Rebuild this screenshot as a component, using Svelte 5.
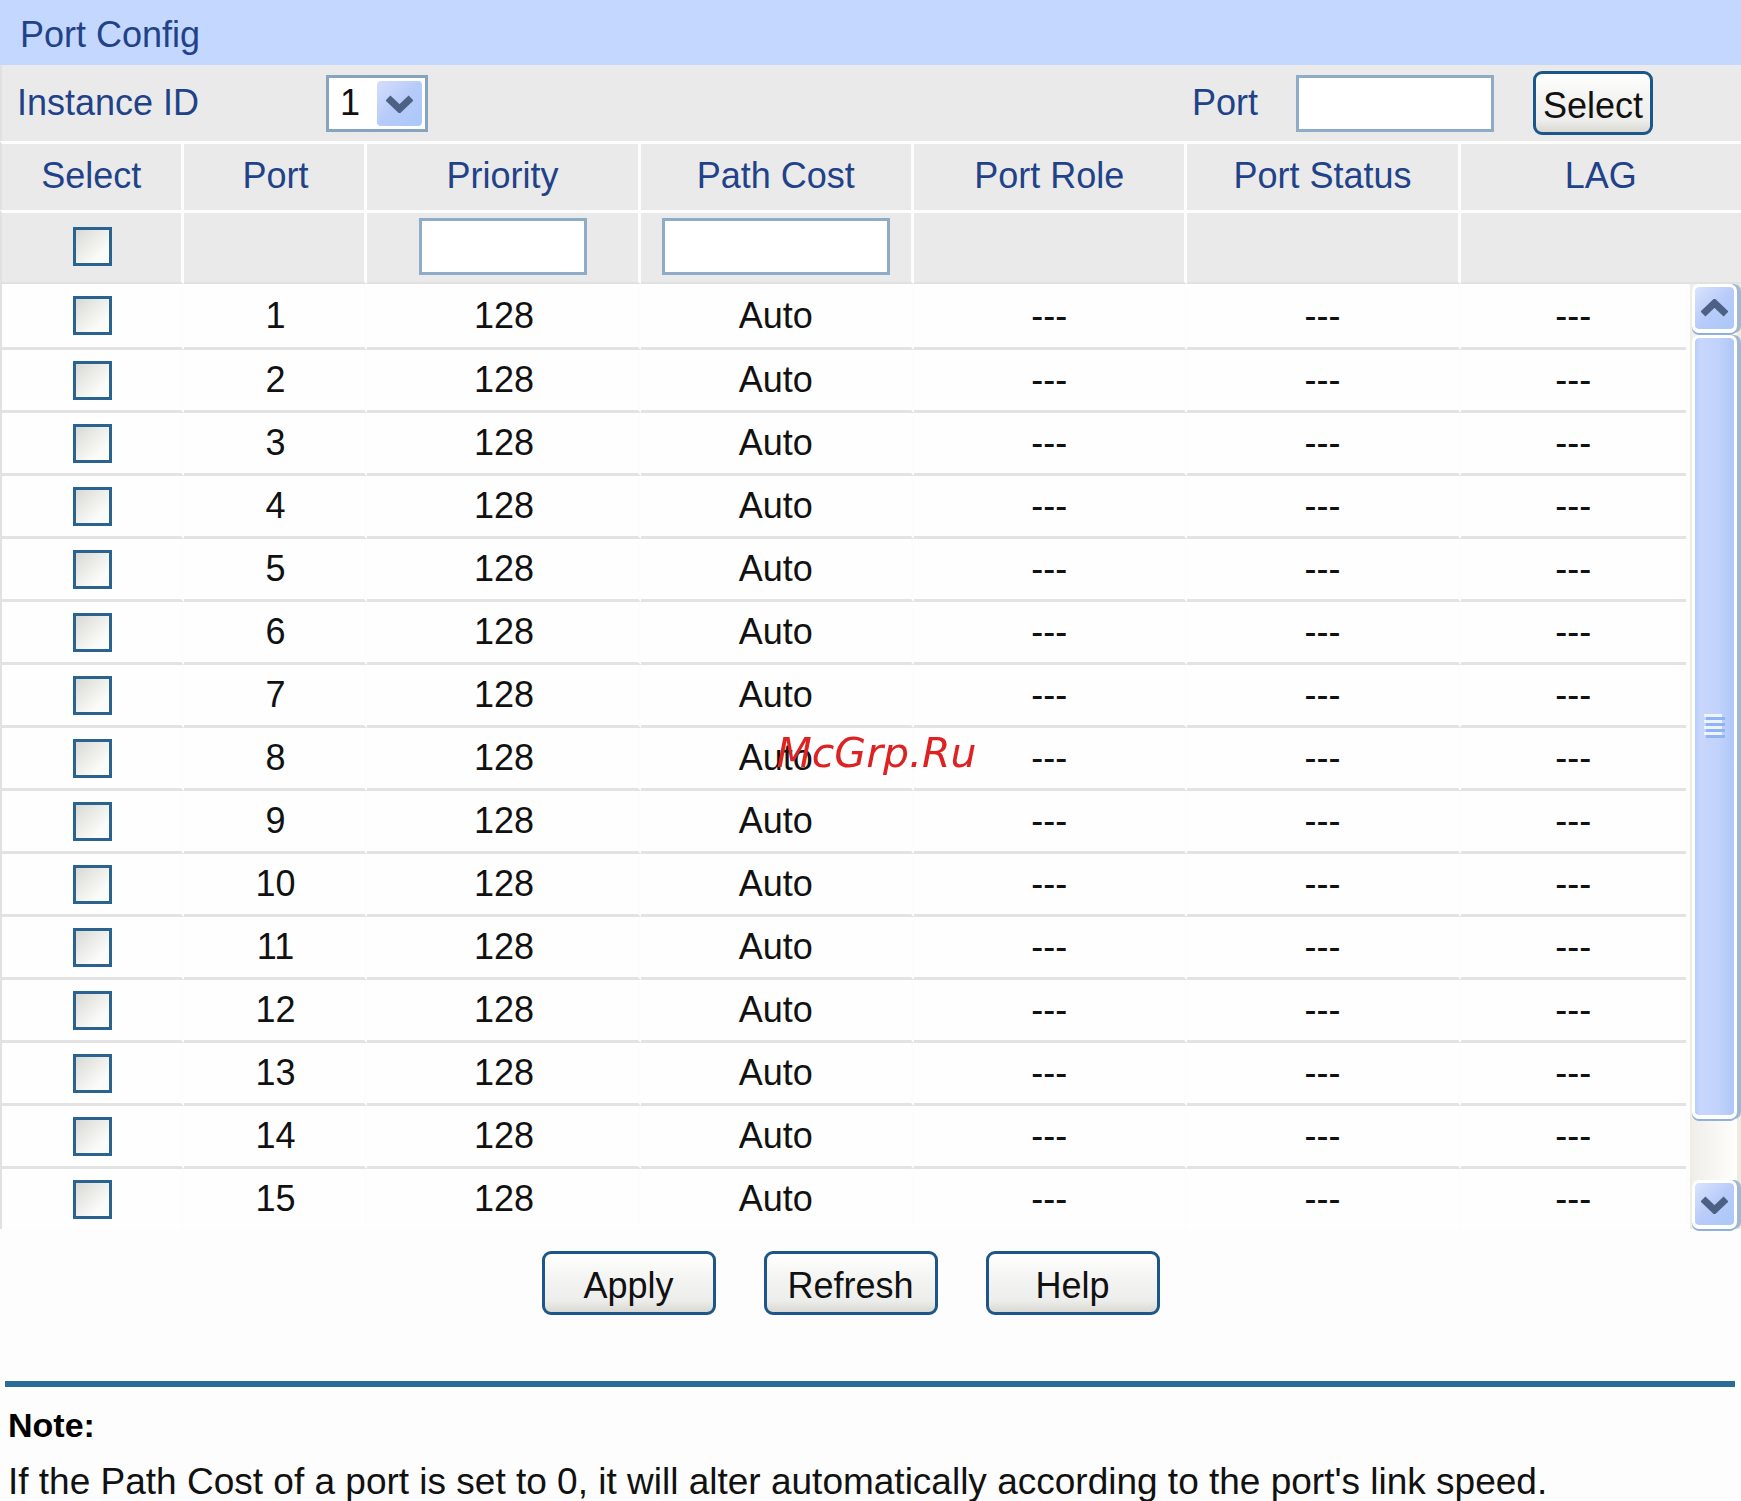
<script>
  const columns = ['Select', 'Port', 'Priority', 'Path Cost', 'Port Role', 'Port Status', 'LAG'];

  let instanceId = $state('1');
  let portFilter = $state('');
  let priority = $state('');
  let pathCost = $state('');

  let ports = $state(
    Array.from({ length: 15 }, (_, i) => ({
      id: i + 1,
      selected: false,
      priority: '128',
      pathCost: 'Auto',
      role: '---',
      status: '---',
      lag: '---',
    }))
  );

  let allSelected = $derived(ports.every((port) => port.selected));

  const toggleAll = (event) => {
    const checked = event.target.checked;
    ports.forEach((port) => (port.selected = checked));
  };

  const selectPort = () => {
    const found = ports.find((port) => String(port.id) === portFilter.trim());
    if (found) {
      found.selected = true;
    }
  };

  // Write the header values to every ticked port
  const apply = () => {
    ports.forEach((port) => {
      if (!port.selected) return;
      if (priority) port.priority = priority;
      if (pathCost) port.pathCost = pathCost === '0' ? 'Auto' : pathCost;
    });
  };

  const refresh = () => {
    priority = '';
    pathCost = '';
    ports.forEach((port) => (port.selected = false));
  };
</script>

{#snippet cols()}
  <colgroup>
    <col class="narrow" />
    <col class="narrow" />
    <col class="wide" />
    <col class="wide" />
    <col class="wide" />
    <col class="wide" />
    <col />
  </colgroup>
{/snippet}

<main>
  <h1>Port Config</h1>

  <div class="toolbar">
    <label for="instance">Instance ID</label>
    <div class="dropdown">
      <select id="instance" bind:value={instanceId}>
        <option>1</option>
        <option>2</option>
        <option>3</option>
      </select>
      <span class="drop-arrow">
        <svg viewBox="0 0 27 19" width="27" height="19"><path d="M2 4 L13.5 15 L25 4" /></svg>
      </span>
    </div>
    <div class="search">
      <label for="port">Port</label>
      <input id="port" type="text" bind:value={portFilter} />
      <button class="btn small" onclick={selectPort}>Select</button>
    </div>
  </div>

  <table class="head">
    {@render cols()}
    <thead>
      <tr>
        {#each columns as column}
          <th>{column}</th>
        {/each}
      </tr>
      <tr class="edit">
        <td><input type="checkbox" aria-label="Select all" checked={allSelected} onchange={toggleAll} /></td>
        <td></td>
        <td><input class="priority" type="text" aria-label="Priority" bind:value={priority} /></td>
        <td><input class="cost" type="text" aria-label="Path Cost" bind:value={pathCost} /></td>
        <td></td>
        <td></td>
        <td></td>
      </tr>
    </thead>
  </table>

  <div class="list">
    <table class="rows">
      {@render cols()}
      <tbody>
        {#each ports as port}
          <tr>
            <td><input type="checkbox" aria-label="Port {port.id}" bind:checked={port.selected} /></td>
            <td>{port.id}</td>
            <td>{port.priority}</td>
            <td>{port.pathCost}</td>
            <td>{port.role}</td>
            <td>{port.status}</td>
            <td>{port.lag}</td>
          </tr>
        {/each}
      </tbody>
    </table>

    <div class="scrollbar">
      <button class="arrow" aria-label="Scroll up">
        <svg viewBox="0 0 27 19" width="27" height="19"><path d="M2 15 L13.5 4 L25 15" /></svg>
      </button>
      <div class="track">
        <div class="thumb">
          <svg class="grip" viewBox="0 0 21 24" width="21" height="24">
            <path class="light" d="M0 1.5h18M0 7.5h18M0 13.5h18M0 19.5h18" />
            <path class="dark" d="M2 4.5h19M2 10.5h19M2 16.5h19M2 22.5h19" />
          </svg>
        </div>
      </div>
      <button class="arrow" aria-label="Scroll down">
        <svg viewBox="0 0 27 19" width="27" height="19"><path d="M2 4 L13.5 15 L25 4" /></svg>
      </button>
    </div>
  </div>

  <div class="actions">
    <button class="btn" onclick={apply}>Apply</button>
    <button class="btn" onclick={refresh}>Refresh</button>
    <button class="btn">Help</button>
  </div>

  <hr />

  <section class="note">
    <h2>Note:</h2>
    <p>If the Path Cost of a port is set to 0, it will alter automatically according to the port's link speed.</p>
  </section>

  <div class="watermark">McGrp.Ru</div>
</main>

<style>
  :global(body) {
    background: #fdfdfd;
  }

  main {
    font-family: 'Liberation Sans', Arial, sans-serif;
    font-size: 36px;
    line-height: 40px;
    color: #111;
    overflow: hidden;
  }

  h1 {
    margin: 0;
    padding: 15px 20px 10px;
    font-size: 36px;
    font-weight: normal;
    color: #1f4289;
    background: #c4d7ff;
  }

  .toolbar {
    display: flex;
    align-items: center;
    height: 76px;
    padding-left: 15px;
    background: #eaeaea;
    border-left: 2px solid #e1e1e1;
    color: #1f4289;
  }

  .toolbar > label {
    width: 309px;
  }

  .dropdown {
    position: relative;
    width: 102px;
  }

  select {
    appearance: none;
    box-sizing: border-box;
    display: block;
    width: 100%;
    height: 57px;
    padding: 0 11px;
    border: 3px solid #86a4c0;
    border-radius: 0;
    background: #fff;
    font: inherit;
    color: #111;
  }

  .drop-arrow {
    position: absolute;
    top: 6px;
    right: 6px;
    bottom: 6px;
    width: 45px;
    display: flex;
    align-items: center;
    justify-content: center;
    border-radius: 4px;
    background: linear-gradient(135deg, #d5defc, #b7cbf9 50%, #a9c8f8);
    pointer-events: none;
  }

  svg path {
    fill: none;
    stroke: #4d6185;
    stroke-width: 7;
  }

  .search {
    display: flex;
    align-items: center;
    margin-left: auto;
    margin-right: 88px;
  }

  .search input {
    width: 198px;
    margin: 0 39px 0 38px;
  }

  input[type='text'] {
    box-sizing: border-box;
    height: 57px;
    padding: 0 8px;
    border: 3px solid #8facc6;
    background: #fff;
    font: inherit;
  }

  input[type='checkbox'] {
    appearance: none;
    box-sizing: border-box;
    display: block;
    width: 39px;
    height: 39px;
    margin: 0 auto;
    border: 3px solid #2a6290;
    background: linear-gradient(135deg, #d9d9d4, #fbfbf9 75%);
  }

  input[type='checkbox']:checked {
    background: #21a121;
  }

  .btn {
    width: 174px;
    height: 64px;
    padding: 6px 0 0;
    border: 3px solid #1d5688;
    border-radius: 9px;
    background: linear-gradient(#fff, #f3f3f1 45%, #ededeb 80%, #d9d8d2);
    font: inherit;
    color: #111;
  }

  .btn.small {
    width: 120px;
  }

  table {
    width: 100%;
    table-layout: fixed;
    border-collapse: separate;
    border-spacing: 0;
    text-align: center;
  }

  .narrow {
    width: 10.55vw;
  }

  .wide {
    width: 15.7vw;
  }

  th,
  td {
    box-sizing: border-box;
    padding: 0;
    border-right: 3px solid #fdfdfd;
  }

  th:last-child,
  td:last-child {
    border-right: none;
  }

  th:first-child,
  td:first-child {
    border-left: 2px solid #e1e1e1;
  }

  .head th {
    height: 69px;
    padding-bottom: 2px;
    border-top: 3px solid #fdfdfd;
    background: #eaeaea;
    color: #1f4289;
    font-weight: normal;
  }

  .head td {
    height: 74px;
    padding-bottom: 2px;
    border-top: 3px solid #fdfdfd;
    border-bottom: 2px solid #e1e1e1;
    background: #eaeaea;
  }

  .head td input {
    display: block;
    margin: 0 auto;
  }

  .priority {
    width: 168px;
  }

  .cost {
    width: 228px;
  }

  .list {
    display: flex;
  }

  .rows {
    flex: 1;
    min-width: 0;
    background: #fefefe;
  }

  .rows td {
    height: 63px;
    border-bottom: 3px solid #e3e3e3;
  }

  th:nth-child(2),
  td:nth-child(-n + 2),
  .rows td:nth-child(3) {
    padding-left: 3px;
  }

  .rows tr:first-child td {
    height: 66px;
  }

  .rows tr:last-child td {
    height: 60px;
    border-bottom: none;
  }

  .scrollbar {
    display: flex;
    flex-direction: column;
    box-sizing: border-box;
    width: 51px;
    margin-left: 4px;
    border-left: 2px solid #eeede2;
    border-right: 4px solid #ecebe2;
    background: linear-gradient(90deg, #f0eeea, #fefefc);
  }

  .arrow,
  .thumb {
    box-sizing: border-box;
    display: flex;
    align-items: center;
    justify-content: center;
    border: 3px solid #fff;
    border-bottom-width: 4px;
    border-radius: 7px;
    box-shadow: 0 2px 0 #8fb0dc, 4px 0 0 #a2b8d2;
  }

  .arrow {
    flex: none;
    height: 49px;
    padding: 0;
    background: linear-gradient(135deg, #dbe4fd, #b9cbfa 50%, #a9c8f8) padding-box, #fff;
  }

  .track {
    flex: 1;
    padding: 2px 0;
  }

  .thumb {
    height: 93%;
    background: linear-gradient(90deg, #b9cdfb, #c8d6fc 15%, #c1d2fb 60%, #aec8f8) padding-box, #fff;
  }

  .grip path {
    stroke-width: 3;
  }

  .grip .light {
    stroke: #eef4fe;
  }

  .grip .dark {
    stroke: #8fb3f6;
  }

  .actions {
    display: flex;
    justify-content: center;
    gap: 48px;
    padding: 22px 40px 66px 0;
  }

  hr {
    height: 6px;
    margin: 0 6px 0 5px;
    border: none;
    background: #2a6b98;
  }

  .note {
    padding: 18px 8px 0;
  }

  h2 {
    margin: 0 0 17px;
    font-size: 34px;
    color: #000;
  }

  p {
    margin: 0;
    font-size: 37px;
    white-space: nowrap;
  }

  /* site mark laid over the middle of the page */
  .watermark {
    position: fixed;
    inset: 0;
    display: flex;
    align-items: center;
    justify-content: center;
    padding: 4px 0 0 12px;
    font-family: 'DejaVu Sans', Verdana, sans-serif;
    font-size: 41px;
    font-style: italic;
    color: #de2222;
    pointer-events: none;
  }
</style>
